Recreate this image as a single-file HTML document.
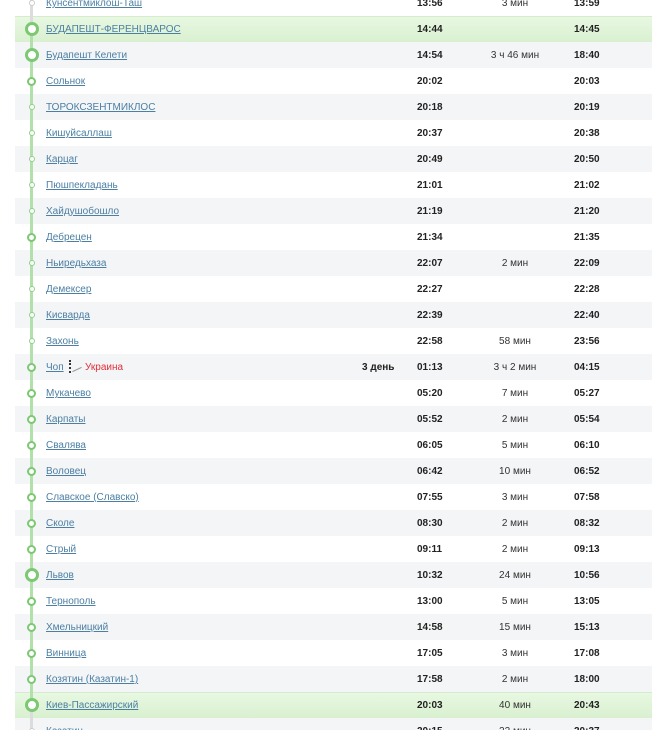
<!DOCTYPE html>
<html><head><meta charset="utf-8"><style>
html,body{margin:0;width:669px;height:730px;overflow:hidden}
body{background:#fff;font-family:"Liberation Sans",Arial,sans-serif;font-size:10px;color:#333;position:relative}
.r{position:absolute;left:15px;width:637px;height:26px}
.g{background:#f4f5f7}
.h{background:linear-gradient(#e8f8e2,#d9f0d0);border-top:1px solid #d5ebcc;box-sizing:border-box}
.r span{position:absolute;top:8px;line-height:12px;white-space:nowrap}
.h span{top:7px}
.n{left:31px;color:#4b7fa3;text-decoration:underline}
.d{left:347px;font-weight:bold;color:#222}
.a{left:402px;font-weight:bold;color:#222}
.s{left:450px;width:100px;text-align:center;color:#333}
.p{left:559px;font-weight:bold;color:#222}
.ua{left:70px!important;color:#e0303a}
.ln{position:absolute;left:30px;width:3px;z-index:1}
.c{position:absolute;border-radius:50%;background:#fff;box-sizing:border-box;z-index:2}
.b{width:14px;height:14px;border:3px solid #7cc873;left:-7px;top:6px}
.m{width:9px;height:9px;border:2px solid #7cc873;left:-4.5px;top:8.5px}
.sm{width:6px;height:6px;border:1.5px solid #8fd087;left:-3px;top:10px}
.h .b{top:5px}
.dot{position:absolute;left:16.5px;top:0;width:0;height:26px}
</style></head><body>
<div class="r" style="top:-10px"><i class="dot"><i class="c sm" style="border-color:#ccc"></i></i><span class="n">Кунсентмиклош-Таш</span><span class="a">13:56</span><span class="s">3 мин</span><span class="p">13:59</span></div>
<div class="r h" style="top:16px"><i class="dot"><i class="c b"></i></i><span class="n">БУДАПЕШТ-ФЕРЕНЦВАРОС</span><span class="a">14:44</span><span class="p">14:45</span></div>
<div class="r g" style="top:42px"><i class="dot"><i class="c b"></i></i><span class="n">Будапешт Келети</span><span class="a">14:54</span><span class="s">3 ч 46 мин</span><span class="p">18:40</span></div>
<div class="r" style="top:68px"><i class="dot"><i class="c m"></i></i><span class="n">Сольнок</span><span class="a">20:02</span><span class="p">20:03</span></div>
<div class="r g" style="top:94px"><i class="dot"><i class="c sm"></i></i><span class="n">ТОРОКСЗЕНТМИКЛОС</span><span class="a">20:18</span><span class="p">20:19</span></div>
<div class="r" style="top:120px"><i class="dot"><i class="c sm"></i></i><span class="n">Кишуйсаллаш</span><span class="a">20:37</span><span class="p">20:38</span></div>
<div class="r g" style="top:146px"><i class="dot"><i class="c sm"></i></i><span class="n">Карцаг</span><span class="a">20:49</span><span class="p">20:50</span></div>
<div class="r" style="top:172px"><i class="dot"><i class="c sm"></i></i><span class="n">Пюшпекладань</span><span class="a">21:01</span><span class="p">21:02</span></div>
<div class="r g" style="top:198px"><i class="dot"><i class="c sm"></i></i><span class="n">Хайдушобошло</span><span class="a">21:19</span><span class="p">21:20</span></div>
<div class="r" style="top:224px"><i class="dot"><i class="c m"></i></i><span class="n">Дебрецен</span><span class="a">21:34</span><span class="p">21:35</span></div>
<div class="r g" style="top:250px"><i class="dot"><i class="c sm"></i></i><span class="n">Ньиредьхаза</span><span class="a">22:07</span><span class="s">2 мин</span><span class="p">22:09</span></div>
<div class="r" style="top:276px"><i class="dot"><i class="c sm"></i></i><span class="n">Демексер</span><span class="a">22:27</span><span class="p">22:28</span></div>
<div class="r g" style="top:302px"><i class="dot"><i class="c sm"></i></i><span class="n">Кисварда</span><span class="a">22:39</span><span class="p">22:40</span></div>
<div class="r" style="top:328px"><i class="dot"><i class="c sm"></i></i><span class="n">Захонь</span><span class="a">22:58</span><span class="s">58 мин</span><span class="p">23:56</span></div>
<div class="r g" style="top:354px"><i class="dot"><i class="c m"></i></i><span class="n">Чоп</span><span style="left:54px;top:6px;width:2px;height:13px;border-left:2px dotted #333"></span><span style="left:57px;top:15px;width:10px;height:1px;background:#999;transform:rotate(-25deg)"></span><span class="ua">Украина</span><span class="d">3 день</span><span class="a">01:13</span><span class="s">3 ч 2 мин</span><span class="p">04:15</span></div>
<div class="r" style="top:380px"><i class="dot"><i class="c m"></i></i><span class="n">Мукачево</span><span class="a">05:20</span><span class="s">7 мин</span><span class="p">05:27</span></div>
<div class="r g" style="top:406px"><i class="dot"><i class="c m"></i></i><span class="n">Карпаты</span><span class="a">05:52</span><span class="s">2 мин</span><span class="p">05:54</span></div>
<div class="r" style="top:432px"><i class="dot"><i class="c m"></i></i><span class="n">Свалява</span><span class="a">06:05</span><span class="s">5 мин</span><span class="p">06:10</span></div>
<div class="r g" style="top:458px"><i class="dot"><i class="c m"></i></i><span class="n">Воловец</span><span class="a">06:42</span><span class="s">10 мин</span><span class="p">06:52</span></div>
<div class="r" style="top:484px"><i class="dot"><i class="c m"></i></i><span class="n">Славское (Славско)</span><span class="a">07:55</span><span class="s">3 мин</span><span class="p">07:58</span></div>
<div class="r g" style="top:510px"><i class="dot"><i class="c m"></i></i><span class="n">Сколе</span><span class="a">08:30</span><span class="s">2 мин</span><span class="p">08:32</span></div>
<div class="r" style="top:536px"><i class="dot"><i class="c m"></i></i><span class="n">Стрый</span><span class="a">09:11</span><span class="s">2 мин</span><span class="p">09:13</span></div>
<div class="r g" style="top:562px"><i class="dot"><i class="c b"></i></i><span class="n">Львов</span><span class="a">10:32</span><span class="s">24 мин</span><span class="p">10:56</span></div>
<div class="r" style="top:588px"><i class="dot"><i class="c m"></i></i><span class="n">Тернополь</span><span class="a">13:00</span><span class="s">5 мин</span><span class="p">13:05</span></div>
<div class="r g" style="top:614px"><i class="dot"><i class="c m"></i></i><span class="n">Хмельницкий</span><span class="a">14:58</span><span class="s">15 мин</span><span class="p">15:13</span></div>
<div class="r" style="top:640px"><i class="dot"><i class="c m"></i></i><span class="n">Винница</span><span class="a">17:05</span><span class="s">3 мин</span><span class="p">17:08</span></div>
<div class="r g" style="top:666px"><i class="dot"><i class="c m"></i></i><span class="n">Козятин (Казатин-1)</span><span class="a">17:58</span><span class="s">2 мин</span><span class="p">18:00</span></div>
<div class="r h" style="top:692px"><i class="dot"><i class="c b"></i></i><span class="n">Киев-Пассажирский</span><span class="a">20:03</span><span class="s">40 мин</span><span class="p">20:43</span></div>
<div class="r g" style="top:718px"><i class="dot"><i class="c sm" style="border-color:#ccc"></i></i><span class="n">Казатин</span><span class="a">20:15</span><span class="s">22 мин</span><span class="p">20:37</span></div>
<div class="ln" style="top:0;height:29px;background:#dcdcdc"></div>
<div class="ln" style="top:29px;height:676px;background:#b2e0aa"></div>
<div class="ln" style="top:705px;height:25px;background:#dcdcdc"></div>
</body></html>
